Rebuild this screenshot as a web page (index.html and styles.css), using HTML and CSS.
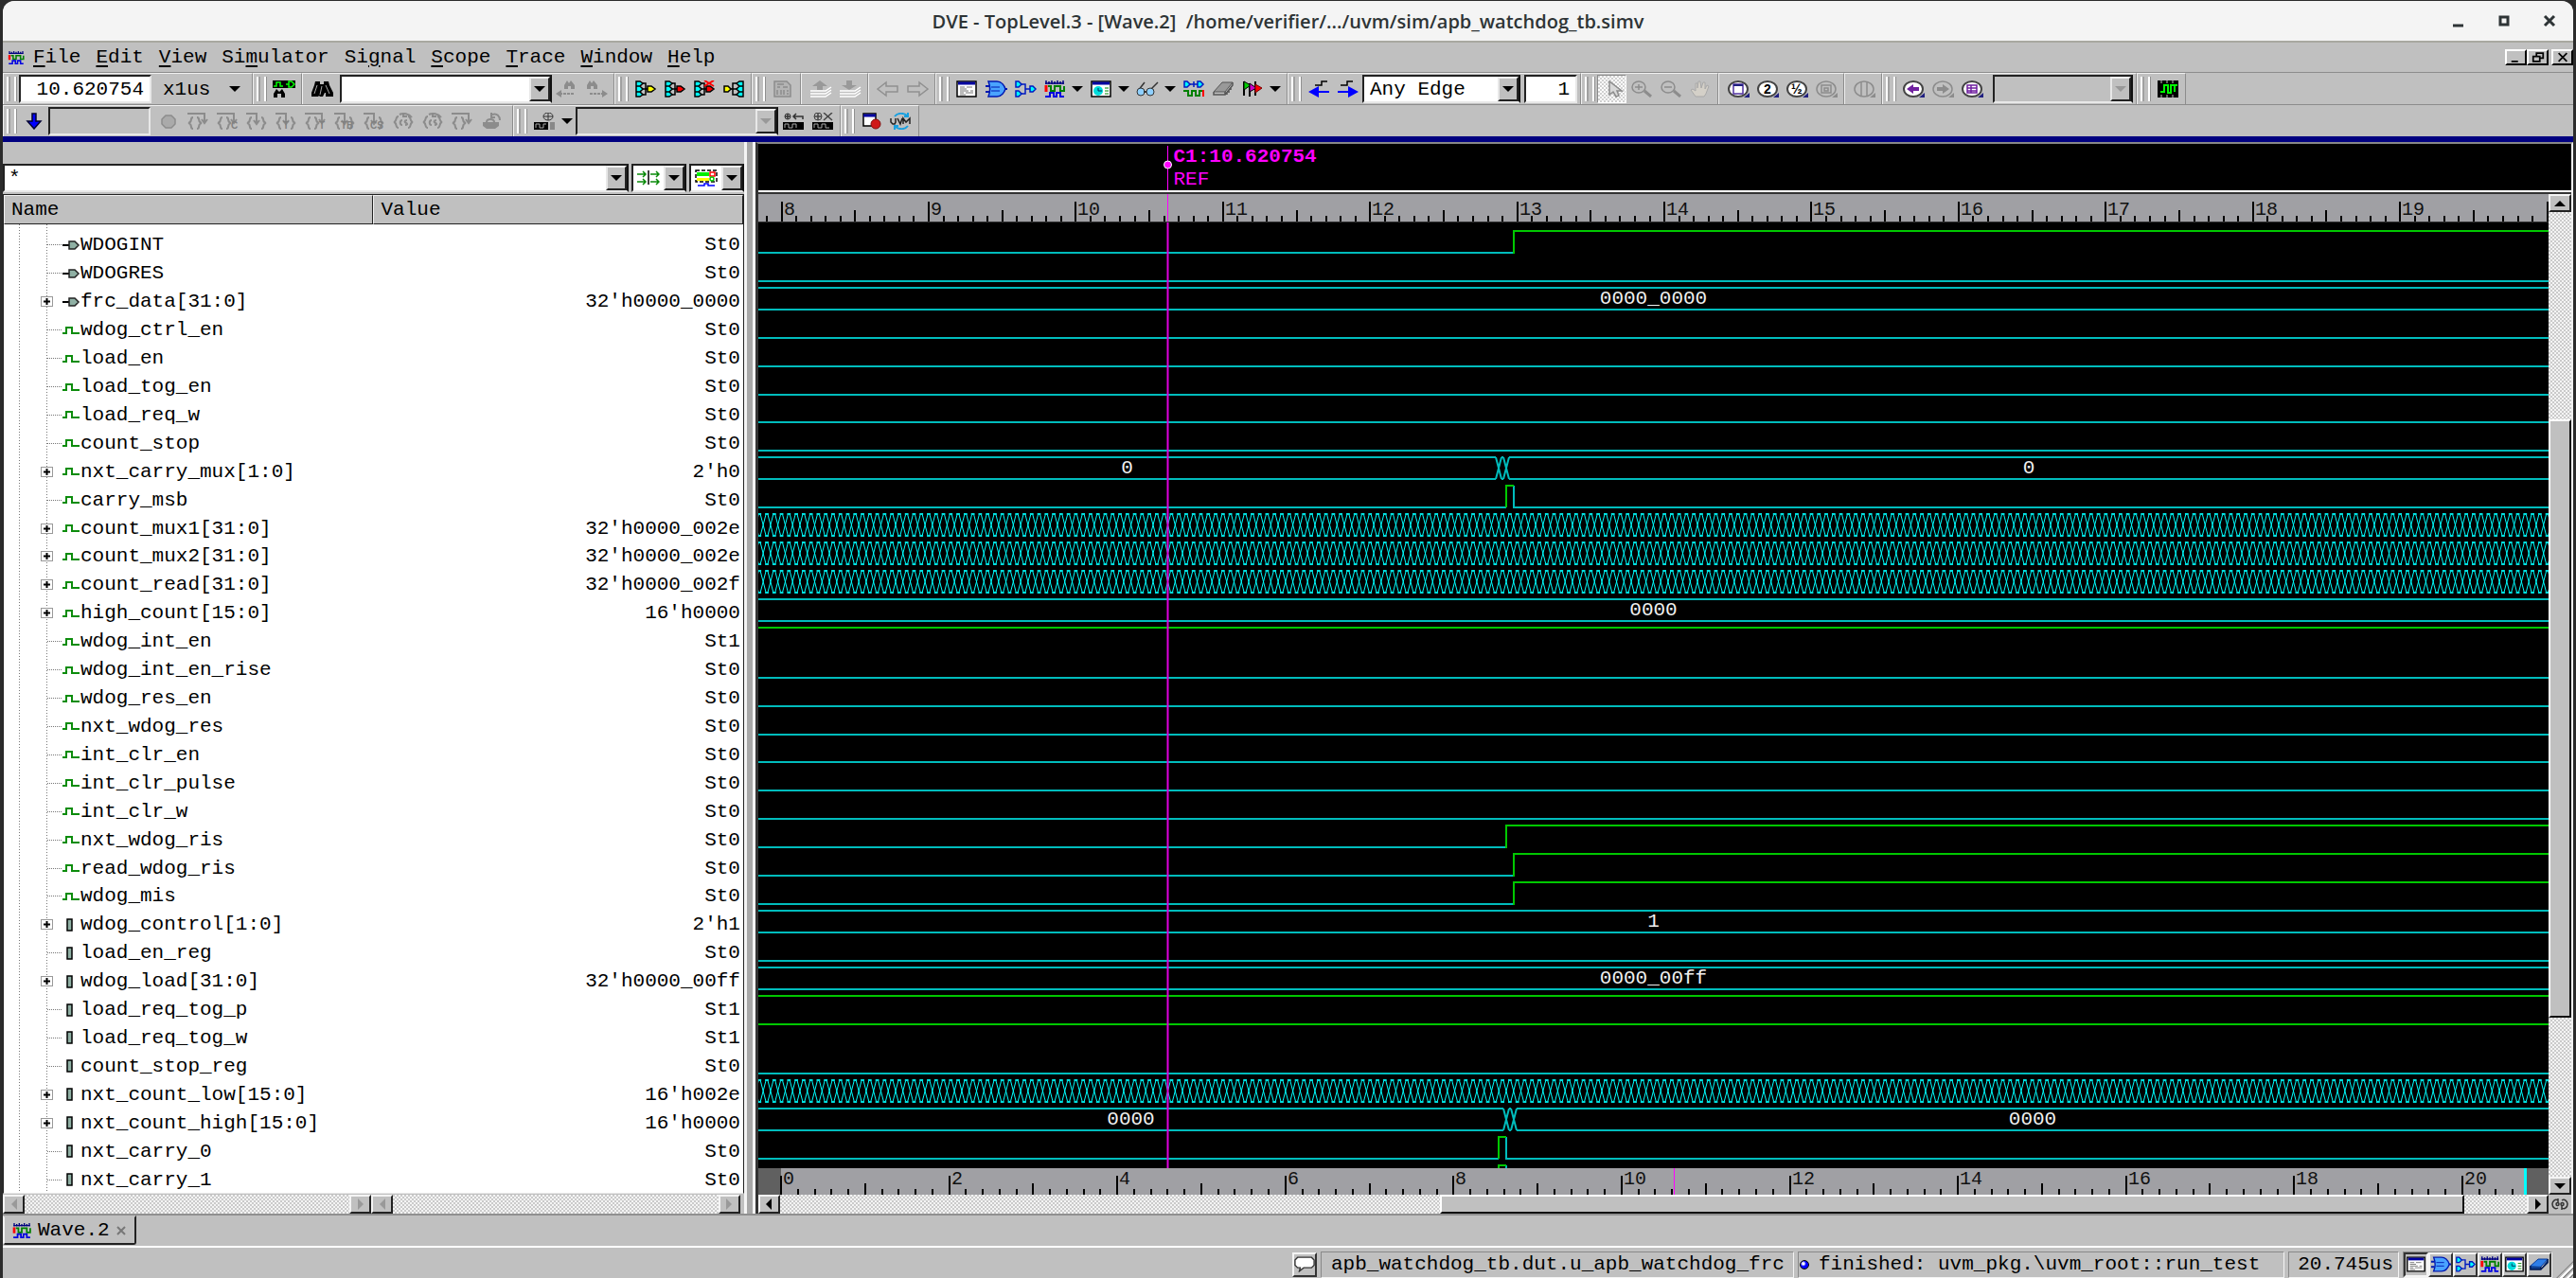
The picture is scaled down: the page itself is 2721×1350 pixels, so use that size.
FILE: index.html
```html
<!DOCTYPE html>
<html lang="en">
<head>
    <meta charset="UTF-8">
    <meta name="viewport" content="width=device-width, initial-scale=1.0">
    <title>DVE - TopLevel.3 - [Wave.2]</title>
    <link rel="stylesheet" href="styles.css">
</head>
<body>
    <!-- icon sprites, all drawn on a 24x18 grid -->
    <svg class="sprites" aria-hidden="true">
        <symbol id="i-wave" viewBox="0 0 24 18">
            <path d="M2 3h20M3 0v4M6 1v3M9 0v4M12 1v3M15 0v4M18 1v3M21 0v4" stroke="#000080" stroke-width="1.5" fill="none"/>
            <path d="M3 5v7" stroke="#f00" stroke-width="3" fill="none"/>
            <path d="M5 6h3v5h4V6h6v5h4V6" stroke="#008000" stroke-width="2" fill="none"/>
            <path d="M2 17h5v-4h4v4h3v-4h4v4h4" stroke="#0000e0" stroke-width="2" fill="none"/>
        </symbol>
        <symbol id="i-list" viewBox="0 0 24 18">
            <path d="M2 1h20v16H2z" fill="#fff" stroke="#000" stroke-width="1.5"/>
            <path d="M3 3h18" stroke="#0000a0" stroke-width="3"/>
            <path d="M5 7h5M12 7h6M5 9h7M5 11h9M16 11h3M5 13h4M11 13h8M5 15h6" stroke="#777"/>
        </symbol>
        <symbol id="i-gate" viewBox="0 0 24 18">
            <path d="M1 6h4M1 12h4M20 9h4" stroke="#0018b0" stroke-width="2"/>
            <path d="M4 1h9c5 0 8 5 9 8-1 3-4 8-9 8H4c2-5 2-11 0-16z" fill="#4aa3ff" stroke="#0018b0" stroke-width="1.5"/>
            <path d="M7 7h9M7 11h9" stroke="#0018b0"/>
        </symbol>
        <symbol id="i-schem" viewBox="0 0 24 18">
            <path d="M7 4h5v10H7M12 9h5" stroke="#0018c0" stroke-width="1.5" fill="none"/>
            <path d="M2 1h3l3 3-3 3H2zM2 11h3l3 3-3 3H2zM17 6h3l3 3-3 3h-3z" fill="#0ff" stroke="#0018c0" stroke-width="1.5"/>
        </symbol>
        <symbol id="i-clock" viewBox="0 0 24 18">
            <path d="M2 1h20v16H2z" fill="#fff" stroke="#000" stroke-width="1.5"/>
            <path d="M3 3h18" stroke="#0000a0" stroke-width="3"/>
            <circle cx="9" cy="11" r="5" fill="#00dcdc"/>
            <path d="M9 8v3h4" stroke="#003060" fill="none"/>
            <path d="M16 8h4M16 11h4M16 14h4" stroke="#080"/>
        </symbol>
        <symbol id="i-chip" viewBox="0 0 24 18">
            <path d="M2 11L11 3h11l-8 9H2z" fill="#2f7fe8" stroke="#003090"/>
            <path d="M2 11v4h12v-3M14 15l8-8V3" fill="#104090" stroke="#001850" stroke-width="1.5"/>
        </symbol>
        <symbol id="i-chip-gray" viewBox="0 0 24 18">
            <path d="M2 12L11 2h11l-8 10H2z" fill="#999" stroke="#555"/>
            <path d="M2 12v3h12v-3M14 15l8-10V2M16 15v-3M18 13v-3M20 10V7" fill="none" stroke="#555" stroke-width="1.5"/>
        </symbol>
        <symbol id="i-glasses" viewBox="0 0 24 18">
            <path d="M2 11L9 2M15 10L23 2" stroke="#333" stroke-width="1.5"/>
            <circle cx="5" cy="12" r="4" fill="#8fd0ff" stroke="#333"/>
            <circle cx="15" cy="12" r="4" fill="#8fd0ff" stroke="#333"/>
            <path d="M8 12h3" stroke="#333" stroke-width="2"/>
        </symbol>
        <symbol id="i-conv" viewBox="0 0 24 18">
            <path d="M2 1h3l3 3-3 3H2zM16 1h3l3 3-3 3h-3z" fill="#0ff" stroke="#0018c0" stroke-width="1.5"/>
            <path d="M8 4h8M12 1v6" stroke="#0018c0" stroke-width="1.500"/>
            <path d="M1 11h5v5h4v-5h4v5h4v-5h4" stroke="#008000" stroke-width="2" fill="none"/>
            <path d="M22 10v7" stroke="#f00" stroke-width="2"/>
        </symbol>
        <symbol id="i-flags" viewBox="0 0 24 18">
            <path d="M3 1v15M9 3v14M15 1v15" stroke="#000" stroke-width="2"/>
            <path d="M3 1l7 4-7 5z" fill="#0c0" stroke="#000"/>
            <path d="M9 3l7 5-7 4z" fill="#c0c" stroke="#000"/>
            <path d="M15 4l7 4-7 5z" fill="#f00" stroke="#700"/>
        </symbol>
        <symbol id="i-binoc" viewBox="0 0 24 18">
            <path d="M5 1h5v3h4V1h5l1 4 4 8v4h-8v-4h-1l-2 4h-3l-1-1-1 1H1v-4l3-8z" fill="#000"/>
            <path d="M7 5L4 14M16 5l4 9M12 6l-2 9" stroke="#aaa"/>
        </symbol>
        <symbol id="i-wavefind" viewBox="0 0 24 18">
            <path d="M0 0h24v8H0z" fill="#000"/>
            <path d="M1 6h3V2h4v4h3M14 4h3V1h3l3 3-3 3h-3V4" stroke="#0f0" stroke-width="1.500" fill="none"/>
            <path d="M1 18v-4l3-5 3 3 3-3 3 5v4H9v-4H5v4z" fill="#000"/>
        </symbol>
        <symbol id="i-findprev" viewBox="0 0 24 18">
            <path d="M9 9V5l3-5 2 3 2-3 4 5v4h-4V6h-3v3zM0 14l6-4v8z" fill="#8c8c8c"/>
            <path d="M4 14h16" stroke="#8c8c8c" stroke-width="2" stroke-dasharray="3 1"/>
        </symbol>
        <symbol id="i-findnext" viewBox="0 0 24 18">
            <path d="M2 9V5l3-5 2 3 2-3 4 5v4H9V6H6v3zM24 14l-6-4v8z" fill="#8c8c8c"/>
            <path d="M5 14h15" stroke="#8c8c8c" stroke-width="2" stroke-dasharray="3 1"/>
        </symbol>
        <symbol id="i-fan" viewBox="0 0 24 18">
            <path d="M8 3h4v12H8M8 9h6" stroke="#000" stroke-width="1.500" fill="none"/>
            <path d="M2 1h4l3 2-3 3H2zM2 6h4l3 3-3 3H2zM2 12h4l3 3-3 2H2z" fill="#0ff" stroke="#000" stroke-width="1.500"/>
        </symbol>
        <symbol id="i-fan-y" viewBox="0 0 24 18">
            <use href="#i-fan"/>
            <path d="M14 6h4l4 3-4 3h-4z" fill="#ff0" stroke="#000" stroke-width="1.500"/>
        </symbol>
        <symbol id="i-fan-r" viewBox="0 0 24 18">
            <use href="#i-fan"/>
            <path d="M14 6h4l4 3-4 3h-4z" fill="#f00" stroke="#000" stroke-width="1.500"/>
        </symbol>
        <symbol id="i-fan-x" viewBox="0 0 24 18">
            <use href="#i-fan-r"/>
            <path d="M12 0l10 6M22 0L12 6" stroke="#f00" stroke-width="2"/>
        </symbol>
        <symbol id="i-fan-in" viewBox="0 0 24 18">
            <path d="M15 3h-4v12h4M15 9H8" stroke="#000" stroke-width="1.500" fill="none"/>
            <path d="M2 6h4l3 3-3 3H2z" fill="#ff0" stroke="#000" stroke-width="1.500"/>
            <path d="M22 1h-4l-3 2 3 3h4zM22 6h-4l-3 3 3 3h4zM22 12h-4l-3 3 3 2h4z" fill="#0ff" stroke="#000" stroke-width="1.500"/>
        </symbol>
        <symbol id="i-doc" viewBox="0 0 24 18">
            <path d="M3 1h13l4 4v12H3z" fill="#b4b4b4" stroke="#8c8c8c" stroke-width="1.500"/>
            <path d="M6 4h7M6 7h3M12 7h5M6 10v5M10 10v5M13 10v5M16 11h2M16 14h2" stroke="#8c8c8c" stroke-width="1.500"/>
        </symbol>
        <symbol id="i-up" viewBox="0 0 24 18">
            <path d="M11 0l8 6h-5v4H8V6H3z" fill="#999"/>
            <path d="M1 11h16l6-4M1 14h16l6-4M1 17h16l6-4" stroke="#fff" stroke-width="1.500" fill="none"/>
        </symbol>
        <symbol id="i-down" viewBox="0 0 24 18">
            <path d="M11 10l8-5h-5V0H8v5H3z" fill="#999"/>
            <path d="M1 11h16l6-4M1 14h16l6-4M1 17h16l6-4" stroke="#fff" stroke-width="1.500" fill="none"/>
        </symbol>
        <symbol id="i-back" viewBox="0 0 24 18">
            <path d="M1 9l9-7v4h12v6H10v4z" fill="#c0c0c0" stroke="#909090" stroke-width="1.500"/>
        </symbol>
        <symbol id="i-fwd" viewBox="0 0 24 18">
            <path d="M23 9l-9-7v4H2v6h12v4z" fill="#c0c0c0" stroke="#909090" stroke-width="1.500"/>
        </symbol>
        <symbol id="i-edgeprev" viewBox="0 0 24 18">
            <path d="M8 5h7V1h6" stroke="#000" stroke-width="1.500" fill="none"/>
            <path d="M1 12l11-6v5h11v2H12v5z" fill="#00f"/>
        </symbol>
        <symbol id="i-edgenext" viewBox="0 0 24 18">
            <path d="M4 5h7V1h6" stroke="#000" stroke-width="1.500" fill="none"/>
            <path d="M23 12L12 6v5H1v2h11v5z" fill="#00f"/>
        </symbol>
        <symbol id="i-pointer" viewBox="0 0 24 18">
            <path d="M9 1v14l4-3 3 5 3-1-2-5h5z" fill="#d8d8d8" stroke="#8c8c8c" stroke-width="1.500"/>
        </symbol>
        <symbol id="i-zoomin" viewBox="0 0 24 18">
            <ellipse cx="9" cy="7" rx="7" ry="6" fill="none" stroke="#8c8c8c" stroke-width="1.500"/>
            <path d="M5 7h8M9 4v6" stroke="#8c8c8c" stroke-width="1.500"/>
            <path d="M15 11l7 6" stroke="#8c8c8c" stroke-width="3"/>
        </symbol>
        <symbol id="i-zoomout" viewBox="0 0 24 18">
            <ellipse cx="9" cy="7" rx="7" ry="6" fill="none" stroke="#8c8c8c" stroke-width="1.500"/>
            <path d="M5 7h8" stroke="#8c8c8c" stroke-width="1.500"/>
            <path d="M15 11l7 6" stroke="#8c8c8c" stroke-width="3"/>
        </symbol>
        <symbol id="i-hand" viewBox="0 0 24 18">
            <path d="M7 17L2 10l2-1 3 2V3h2v5l1-7h2l1 7 2-6h2v7l2-4 2 1-3 8-2 3z" fill="#d4d0c8" stroke="#a8a8a8"/>
        </symbol>
        <symbol id="i-lens" viewBox="0 0 24 18">
            <ellipse cx="12" cy="9" rx="10" ry="8" fill="#fff" stroke="#444" stroke-width="2"/>
            <path d="M18 18h6v-5z" fill="#202080"/>
        </symbol>
        <symbol id="i-lens-off" viewBox="0 0 24 18">
            <ellipse cx="12" cy="9" rx="10" ry="8" fill="none" stroke="#8c8c8c" stroke-width="1.500"/>
            <path d="M18 18h6v-5z" fill="#8c8c8c"/>
        </symbol>
        <symbol id="i-fit" viewBox="0 0 24 18">
            <use href="#i-lens"/>
            <path d="M7 4h10v10H7z" fill="#fff" stroke="#5030a0" stroke-width="1.500"/>
            <path d="M7 5h10" stroke="#202080" stroke-width="2"/>
        </symbol>
        <symbol id="i-selbox" viewBox="0 0 24 18">
            <use href="#i-lens-off"/>
            <path d="M7 5h10v8H7zM10 8h4v3h-4z" fill="none" stroke="#8c8c8c" stroke-width="1.500"/>
        </symbol>
        <symbol id="i-split" viewBox="0 0 24 18">
            <use href="#i-lens-off"/>
            <path d="M9 1v16M15 1v16" stroke="#8c8c8c" stroke-width="1.500"/>
        </symbol>
        <symbol id="i-lensback" viewBox="0 0 24 18">
            <use href="#i-lens"/>
            <path d="M5 9l7-5v3h6v4h-6v3z" fill="#7020a0"/>
        </symbol>
        <symbol id="i-lensfwd" viewBox="0 0 24 18">
            <use href="#i-lens-off"/>
            <path d="M19 9l-7-5v3H6v4h6v3z" fill="#8c8c8c"/>
        </symbol>
        <symbol id="i-lenslist" viewBox="0 0 24 18">
            <use href="#i-lens"/>
            <path d="M7 5h10v8H7zM11 5v8M7 8h10M7 11h10" fill="none" stroke="#7020a0" stroke-width="1.500"/>
        </symbol>
        <symbol id="i-waves" viewBox="0 0 24 18">
            <path d="M1 0h22v18H1z" fill="#000"/>
            <path d="M4 12h4V5h4v8h3V5h4v7M19 5h3" stroke="#0f0" stroke-width="2" fill="none"/>
            <path d="M5 0v3M11 0v3M17 0v3M5 15v3M11 15v3M17 15v3" stroke="#c0c0c0" stroke-width="1"/>
        </symbol>
        <symbol id="i-run" viewBox="0 0 24 18">
            <path d="M12 17l7-8h-5V1h-4v8H5z" fill="#00f" stroke="#003" stroke-width="1.500"/>
        </symbol>
        <symbol id="i-stop" viewBox="0 0 24 18">
            <path d="M9 3h6l4 4v5l-4 4H9l-4-4V7z" fill="#aaa" stroke="#8c8c8c" stroke-width="1.500"/>
        </symbol>
        <symbol id="i-brace" viewBox="0 0 24 18">
            <path d="M7 5C3 5 7 10 2 11c5 1 1 6 5 6M11 5c4 0 0 5 5 6-5 1-1 6-5 6M1 1h18v9M16 7l3 4 3-4" fill="none" stroke="#8c8c8c" stroke-width="2"/>
        </symbol>
        <symbol id="i-brace-in" viewBox="0 0 24 18">
            <path d="M7 5C3 5 7 10 2 11c5 1 1 6 5 6M17 5c4 0 0 5 5 6-5 1-1 6-5 6M1 1h11v10M9 8l3 4 3-4" fill="none" stroke="#8c8c8c" stroke-width="2"/>
        </symbol>
        <symbol id="i-brace-loop" viewBox="0 0 24 18">
            <path d="M7 4C3 4 6 9 2 10c4 1 1 6 5 6M17 4c4 0 1 5 5 6-4 1-1 6-5 6M8 2c4-2 10-1 13 3M12 0v4h4M11 8c-3 0-3 5 0 5M16 8c-3 0-3 2-1 3s1 2-1 2" fill="none" stroke="#8c8c8c" stroke-width="2"/>
        </symbol>
        <symbol id="i-pot" viewBox="0 0 24 18">
            <path d="M3 10h17v4l-4 3H7l-4-3z" fill="#8c8c8c"/>
            <path d="M7 10c0-4 8-4 8 0M13 2c5-2 8 2 8 6M12 0v5h4" fill="none" stroke="#8c8c8c" stroke-width="2"/>
        </symbol>
        <symbol id="i-target" viewBox="0 0 24 18">
            <ellipse cx="16" cy="4" rx="5" ry="4" fill="none" stroke="#333"/>
            <path d="M16 0v8M11 4h10" stroke="#333"/>
            <path d="M1 10h15v8H1z" fill="#000"/>
            <path d="M3 16v-4h4v4h4v-4h3" stroke="#aaa" fill="none"/>
            <path d="M18 10h5v8h-5z" fill="#888"/>
        </symbol>
        <symbol id="i-marker" viewBox="0 0 24 18">
            <circle cx="6" cy="4" r="3" fill="none" stroke="#333"/>
            <path d="M3 4h6M6 1v6M22 7V4H12M15 1l-3 3 3 3" stroke="#333" stroke-width="1.500" fill="none"/>
            <path d="M1 10h22v8H1z" fill="#000"/>
            <path d="M3 16v-4h4v4h4v-4h4v4" stroke="#aaa" fill="none"/>
        </symbol>
        <symbol id="i-unmark" viewBox="0 0 24 18">
            <circle cx="7" cy="4" r="4" fill="none" stroke="#444"/>
            <path d="M3 4h8M7 0v8M13 0l9 8M22 0l-9 8" stroke="#444" stroke-width="1.500"/>
            <path d="M1 10h22v8H1z" fill="#000"/>
            <path d="M3 16v-4h4v4h4v-4h4v4h4" stroke="#aaa" fill="none"/>
        </symbol>
        <symbol id="i-record" viewBox="0 0 24 18">
            <path d="M3 1h13v13H3z" fill="#fff" stroke="#000" stroke-width="1.500"/>
            <path d="M3 3h13" stroke="#0000a0" stroke-width="3"/>
            <circle cx="16" cy="12" r="5" fill="#d01818" stroke="#801010"/>
        </symbol>
        <symbol id="i-uvm" viewBox="0 0 24 18">
            <path d="M5 4c3-4 9-4 13-1M19 0v4h-4M19 14c-3 4-9 4-13 1M5 18v-4h4" fill="none" stroke="#18a0e0" stroke-width="2"/>
            <path d="M1 6v4l2 2h2l1-2V6M8 6l3 6 2-6M14 12V6l3 4 4-4v6" fill="none" stroke="#222" stroke-width="1.500"/>
        </symbol>
        <symbol id="i-arrows" viewBox="0 0 24 18">
            <path d="M0 5h8M14 5h9M0 13h8M14 13h9M6 2l3 3-3 3M20 2l3 3-3 3M6 10l3 3-3 3M20 10l3 3-3 3" fill="none" stroke="#0a8a0a" stroke-width="1.500"/>
            <path d="M12 1v15" stroke="#000" stroke-width="1.500"/>
        </symbol>
        <symbol id="i-group" viewBox="0 0 24 18">
            <path d="M1 1h22v12H1z" fill="none" stroke="#000" stroke-width="1.500" stroke-dasharray="4 2"/>
            <path d="M2 3h13v4H2z" fill="#0e0"/>
            <path d="M16 3h5v4h-5z" fill="#fff" stroke="#f00" stroke-width="1.500"/>
            <path d="M2 9h13v3H2z" fill="#ff0"/>
            <circle cx="18" cy="10" r="2" fill="#fff" stroke="#0c0" stroke-width="1.500"/>
            <path d="M3 17h7v-2h4v2h7" fill="none" stroke="#00f" stroke-width="1.500"/>
        </symbol>
        <symbol id="i-bubble" viewBox="0 0 24 18">
            <path d="M4 1h16l3 3v6l-3 3h-9l-5 4 1-4H4l-3-3V4z" fill="#fff" stroke="#333" stroke-width="1.500"/>
        </symbol>
        <symbol id="i-link" viewBox="0 0 24 18">
            <path d="M10 5c-3-2-6 1-6 4s3 6 6 4M10 3v4M8 9c0-2 3-2 3 0s-3 2-3 0M14 13c3 2 6-1 6-4s-3-6-6-4M14 15v-4M13 9c0-2 3-2 3 0s-3 2-3 0" fill="none" stroke="#333" stroke-width="1.500"/>
        </symbol>
        <symbol id="i-port" viewBox="0 0 24 18">
            <path d="M3 9h7" stroke="#000" stroke-width="2"/>
            <path d="M10 5h6l4 4-4 4h-6z" fill="#8fb0a4" stroke="#222" stroke-width="1.500"/>
        </symbol>
        <symbol id="i-net" viewBox="0 0 24 18">
            <path d="M3 12h4V6h6v6h8" fill="none" stroke="#0c8c0c" stroke-width="2"/>
        </symbol>
        <symbol id="i-reg" viewBox="0 0 24 18">
            <path d="M8 3h5v12H8z" fill="#8fb0a4" stroke="#000" stroke-width="1.500"/>
        </symbol>
    </svg>

    <div class="window">
        <header class="titlebar">
            <h1 class="title">DVE - TopLevel.3 - [Wave.2]&nbsp; /home/verifier/.../uvm/sim/apb_watchdog_tb.simv</h1>
            <div class="win-controls">
                <button aria-label="Minimize"><svg viewBox="0 0 14 14"><path d="M1 12h11" stroke="#2e3436" stroke-width="3"/></svg></button>
                <button aria-label="Maximize"><svg viewBox="0 0 14 14"><path d="M3 3h8v8H3z" fill="none" stroke="#2e3436" stroke-width="3"/></svg></button>
                <button aria-label="Close"><svg viewBox="0 0 14 14"><path d="M2 2l10 10M12 2L2 12" stroke="#2e3436" stroke-width="3"/></svg></button>
            </div>
        </header>

        <nav class="menubar">
            <svg class="menu-icon"><use href="#i-wave"/></svg>
            <button><u>F</u>ile</button>
            <button><u>E</u>dit</button>
            <button><u>V</u>iew</button>
            <button>Si<u>m</u>ulator</button>
            <button>Si<u>g</u>nal</button>
            <button><u>S</u>cope</button>
            <button><u>T</u>race</button>
            <button><u>W</u>indow</button>
            <button><u>H</u>elp</button>
            <div class="mdi">
                <button aria-label="Minimize window"><svg viewBox="0 0 16 12"><path d="M2 11h8" stroke="#000" stroke-width="2"/></svg></button>
                <button aria-label="Restore window"><svg viewBox="0 0 16 12"><path d="M6 4V1h8v6h-3M2 5h8v6H2z" fill="none" stroke="#000" stroke-width="2"/></svg></button>
                <button class="mdi-close" aria-label="Close window"><svg viewBox="0 0 16 12"><path d="M3 1l10 10M13 1L3 11" stroke="#000" stroke-width="2"/></svg></button>
            </div>
        </nav>

        <div class="toolbar">
            <div class="group w-time">
                <span class="grip"></span>
                <input class="field time" aria-label="Time" value="10.620754">
                <span class="unit"><select aria-label="Time unit"><option>x1us</option></select><span class="tri"></span></span>
            </div>
            <div class="group"><span class="grip"></span><button class="tool" aria-label="Find signal"><svg><use href="#i-wavefind"/></svg></button></div>
            <div class="group plain">
                <button class="tool" aria-label="Find"><svg><use href="#i-binoc"/></svg></button>
                <span class="combo find"><select aria-label="Find text"><option></option></select><span class="drop"></span></span>
                <button class="tool" aria-label="Find previous" disabled><svg><use href="#i-findprev"/></svg></button>
                <button class="tool" aria-label="Find next" disabled><svg><use href="#i-findnext"/></svg></button>
            </div>
            <div class="group">
                <span class="grip"></span>
                <button class="tool" aria-label="Drivers"><svg><use href="#i-fan-y"/></svg></button>
                <button class="tool" aria-label="Active drivers"><svg><use href="#i-fan-r"/></svg></button>
                <button class="tool" aria-label="Trace X"><svg><use href="#i-fan-x"/></svg></button>
                <button class="tool" aria-label="Loads"><svg><use href="#i-fan-in"/></svg></button>
            </div>
            <div class="group"><span class="grip"></span><button class="tool" aria-label="Source" disabled><svg><use href="#i-doc"/></svg></button></div>
            <div class="group plain">
                <button class="tool" aria-label="Scope up" disabled><svg><use href="#i-up"/></svg></button>
                <button class="tool" aria-label="Scope down" disabled><svg><use href="#i-down"/></svg></button>
            </div>
            <div class="group plain">
                <button class="tool" aria-label="Back" disabled><svg><use href="#i-back"/></svg></button>
                <button class="tool" aria-label="Forward" disabled><svg><use href="#i-fwd"/></svg></button>
            </div>
            <div class="group">
                <span class="grip"></span>
                <button class="tool" aria-label="Source view"><svg><use href="#i-list"/></svg></button>
                <button class="tool" aria-label="Schematic"><svg><use href="#i-gate"/></svg></button>
                <button class="tool" aria-label="Path schematic"><svg><use href="#i-schem"/></svg></button>
                <button class="tool" aria-label="Wave view"><svg><use href="#i-wave"/></svg></button>
                <button class="more" aria-label="Wave options"><span class="tri"></span></button>
                <button class="tool" aria-label="List view"><svg><use href="#i-clock"/></svg></button>
                <button class="more" aria-label="List options"><span class="tri"></span></button>
                <button class="tool" aria-label="Watch"><svg><use href="#i-glasses"/></svg></button>
                <button class="more" aria-label="Watch options"><span class="tri"></span></button>
                <button class="tool" aria-label="Compare"><svg><use href="#i-conv"/></svg></button>
                <button class="tool" aria-label="Memory"><svg><use href="#i-chip-gray"/></svg></button>
                <button class="tool" aria-label="Assertions"><svg><use href="#i-flags"/></svg></button>
                <button class="more" aria-label="Assertion options"><span class="tri"></span></button>
            </div>
            <div class="group">
                <span class="grip"></span>
                <button class="tool" aria-label="Previous edge"><svg><use href="#i-edgeprev"/></svg></button>
                <button class="tool" aria-label="Next edge"><svg><use href="#i-edgenext"/></svg></button>
                <span class="combo edge"><select aria-label="Edge type"><option>Any Edge</option></select><span class="drop"></span></span>
                <input class="field count" aria-label="Edge count" value="1">
            </div>
            <div class="group">
                <span class="grip"></span>
                <button class="tool pressed" aria-label="Select" disabled><svg><use href="#i-pointer"/></svg></button>
                <button class="tool" aria-label="Zoom in" disabled><svg><use href="#i-zoomin"/></svg></button>
                <button class="tool" aria-label="Zoom out" disabled><svg><use href="#i-zoomout"/></svg></button>
                <button class="tool" aria-label="Pan" disabled><svg><use href="#i-hand"/></svg></button>
            </div>
            <div class="group plain">
                <button class="tool" aria-label="Zoom full"><svg><use href="#i-fit"/></svg></button>
                <button class="tool" aria-label="Zoom in 2x"><svg viewBox="0 0 24 18"><use href="#i-lens"/><text x="8" y="14" class="lens-text">2</text></svg></button>
                <button class="tool" aria-label="Zoom out 2x"><svg viewBox="0 0 24 18"><use href="#i-lens"/><text x="6" y="14" class="lens-text">½</text></svg></button>
                <button class="tool" aria-label="Zoom to selection" disabled><svg><use href="#i-selbox"/></svg></button>
            </div>
            <div class="group plain"><button class="tool" aria-label="Zoom cursors" disabled><svg><use href="#i-split"/></svg></button></div>
            <div class="group">
                <span class="grip"></span>
                <button class="tool" aria-label="Zoom back"><svg><use href="#i-lensback"/></svg></button>
                <button class="tool" aria-label="Zoom forward" disabled><svg><use href="#i-lensfwd"/></svg></button>
                <button class="tool" aria-label="Named zooms"><svg><use href="#i-lenslist"/></svg></button>
                <span class="combo off zooms"><select aria-label="Zoom name" disabled><option></option></select><span class="drop"></span></span>
            </div>
            <div class="group"><span class="grip"></span><button class="tool" aria-label="Waves"><svg><use href="#i-waves"/></svg></button></div>
        </div>

        <div class="toolbar">
            <div class="group w-sim">
                <span class="grip"></span>
                <button class="tool" aria-label="Run"><svg><use href="#i-run"/></svg></button>
                <input class="field off step" aria-label="Run time" disabled>
                <button class="tool" aria-label="Stop" disabled><svg><use href="#i-stop"/></svg></button>
                <button class="tool" aria-label="Next" disabled><svg><use href="#i-brace"/></svg></button>
                <button class="tool" aria-label="Next in C" disabled><svg viewBox="0 0 24 18"><use href="#i-brace"/><text x="16" y="17" class="tag">C</text></svg></button>
                <button class="tool" aria-label="Step" disabled><svg><use href="#i-brace-in"/></svg></button>
                <button class="tool" aria-label="Step thread" disabled><svg viewBox="0 0 24 18"><use href="#i-brace-in"/><text x="9" y="17" class="tag">T</text></svg></button>
                <button class="tool" aria-label="Next thread" disabled><svg viewBox="0 0 24 18"><use href="#i-brace"/><text x="16" y="17" class="tag">T</text></svg></button>
                <button class="tool" aria-label="Step testbench" disabled><svg viewBox="0 0 24 18"><use href="#i-brace-in"/><text x="8" y="17" class="tag">TB</text></svg></button>
                <button class="tool" aria-label="Step constraint" disabled><svg viewBox="0 0 24 18"><use href="#i-brace-in"/><text x="8" y="17" class="tag">CS</text></svg></button>
                <button class="tool" aria-label="Constraint solver" disabled><svg><use href="#i-brace-loop"/></svg></button>
                <button class="tool" aria-label="Constraint rerun" disabled><svg><use href="#i-brace-loop"/></svg></button>
                <button class="tool" aria-label="Step out" disabled><svg><use href="#i-brace"/></svg></button>
                <button class="tool" aria-label="Restart" disabled><svg><use href="#i-pot"/></svg></button>
            </div>
            <div class="group">
                <span class="grip"></span>
                <button class="tool" aria-label="Add marker"><svg><use href="#i-target"/></svg></button>
                <button class="more" aria-label="Marker options"><span class="tri"></span></button>
                <span class="combo off marks"><select aria-label="Marker" disabled><option></option></select><span class="drop"></span></span>
                <button class="tool" aria-label="Go to marker"><svg><use href="#i-marker"/></svg></button>
                <button class="tool" aria-label="Delete marker"><svg><use href="#i-unmark"/></svg></button>
            </div>
            <div class="group">
                <span class="grip"></span>
                <button class="tool" aria-label="Record"><svg><use href="#i-record"/></svg></button>
                <button class="tool" aria-label="UVM"><svg><use href="#i-uvm"/></svg></button>
            </div>
        </div>

        <main class="workspace">
            <section class="signals">
                <div class="filters">
                    <span class="combo filter"><select aria-label="Filter"><option>*</option></select><span class="drop"></span></span>
                    <button class="combo filter-btn" aria-label="Port filter"><svg><use href="#i-arrows"/></svg><span class="drop"></span></button>
                    <button class="combo filter-btn" aria-label="Group filter"><svg><use href="#i-group"/></svg><span class="drop"></span></button>
                </div>
                <table class="list">
                    <thead>
                        <tr><th>Name</th><th>Value</th></tr>
                    </thead>
                    <tbody id="rows"></tbody>
                </table>
                <div class="list-scroll">
                    <div class="hscroll"><button class="arrow left off" aria-label="Left"></button><span class="track"></span><button class="arrow right off" aria-label="Right"></button></div>
                    <div class="hscroll"><button class="arrow left off" aria-label="Left"></button><span class="track"></span><button class="arrow right off" aria-label="Right"></button></div>
                </div>
            </section>
            <div class="splitter"></div>
            <section class="waves">
                <svg class="band" id="band"></svg>
                <div class="wave-body">
                    <div class="canvas">
                        <svg class="ruler" id="ruler"></svg>
                        <svg class="plot" id="plot"></svg>
                        <svg class="overview" id="overview"></svg>
                        <div class="hscroll">
                            <button class="arrow left" aria-label="Left"></button>
                            <span class="track h-before"></span><span class="thumb h-thumb"></span><span class="track h-after"></span>
                            <button class="arrow right" aria-label="Right"></button>
                        </div>
                    </div>
                    <div class="vscroll">
                        <button class="arrow up" aria-label="Up"></button>
                        <span class="track v-before"></span><span class="thumb v-thumb"></span><span class="track v-after"></span>
                        <button class="arrow down" aria-label="Down"></button>
                        <button class="link" aria-label="Link windows"><svg><use href="#i-link"/></svg></button>
                    </div>
                </div>
            </section>
        </main>

        <div class="tabs">
            <button class="tab"><svg><use href="#i-wave"/></svg>Wave.2<svg class="tab-close" viewBox="0 0 12 12"><path d="M2 2l8 8M10 2l-8 8" stroke="#777" stroke-width="2"/></svg></button>
        </div>

        <footer class="status">
            <button class="status-btn" aria-label="Messages"><svg><use href="#i-bubble"/></svg></button>
            <span class="cell scope">apb_watchdog_tb.dut.u_apb_watchdog_frc</span>
            <span class="cell state"><i class="dot"></i>finished: uvm_pkg.\uvm_root::run_test</span>
            <span class="cell now">20.745us</span>
            <div class="cell views">
                <button class="status-btn on" aria-label="Source"><svg><use href="#i-list"/></svg></button>
                <button class="status-btn" aria-label="Schematic"><svg><use href="#i-gate"/></svg></button>
                <button class="status-btn" aria-label="Path"><svg><use href="#i-schem"/></svg></button>
                <button class="status-btn" aria-label="Wave"><svg><use href="#i-wave"/></svg></button>
                <button class="status-btn" aria-label="List"><svg><use href="#i-clock"/></svg></button>
                <button class="status-btn" aria-label="Memory"><svg><use href="#i-chip"/></svg></button>
            </div>
            <span class="resize"></span>
        </footer>
    </div>

    <script src="wave.js"></script>
</body>
</html>
```
FILE: styles.css
```css
* {
    box-sizing: border-box;
}

body {
    margin: 0;
    height: 100vh;
    padding: 1px 3px 0;
    background: #2b2b2b;
    font-family: "Liberation Mono", "Courier New", monospace;
    font-size: 21px;
    color: #000;
    overflow: hidden;
}

button, input, select {
    font: inherit;
    color: inherit;
    margin: 0;
    padding: 0;
    border: 0;
    border-radius: 0;
    background: none;
    appearance: none;
    opacity: 1;
}

button {
    display: flex;
    align-items: center;
    justify-content: center;
}

.sprites {
    display: none;
}

svg {
    display: block;
    width: 24px;
    height: 18px;
    flex: none;
}

.window {
    height: 100%;
    display: flex;
    flex-direction: column;
    background: #c0c0c0;
    border-radius: 12px 12px 0 0;
    overflow: hidden;
}

/* title bar */
.titlebar {
    display: grid;
    grid-template-columns: 1fr auto 1fr;
    align-items: center;
    height: 44px;
    flex: none;
    background: #f4f4f4;
    border-bottom: 2px solid #a8a8a0;
}

.title {
    grid-column: 2;
    margin: 0;
    font-family: "Open Sans", "Noto Sans", sans-serif;
    font-size: 20px;
    font-weight: 600;
    color: #2e3436;
    white-space: nowrap;
}

.win-controls {
    display: flex;
    justify-content: flex-end;
    gap: 34px;
    padding-right: 18px;
}

.win-controls svg {
    width: 14px;
    height: 14px;
}

/* menu */
.menubar {
    display: flex;
    align-items: center;
    gap: 16px;
    height: 31px;
    flex: none;
    padding-left: 4px;
}

.menubar u {
    text-underline-offset: 3px;
}

.menu-icon {
    width: 20px;
    height: 14px;
    margin-right: -8px;
}

.mdi {
    display: flex;
    margin-left: auto;
}

.mdi button {
    width: 23px;
    height: 17px;
    border: 2px solid;
    border-color: #fff #000 #000 #fff;
}

.mdi .mdi-close {
    margin-left: 3px;
}

.mdi svg {
    width: 14px;
    height: 11px;
}

/* toolbars */
.toolbar {
    display: flex;
    height: 34px;
    flex: none;
    border-top: 1px solid #8c8c8c;
}

.group {
    display: flex;
    align-items: stretch;
    padding-right: 3px;
    border-top: 1px solid #f0f0f0;
    border-right: 1px solid #8c8c8c;
    border-left: 1px solid #f0f0f0;
}

.group.plain {
    padding-left: 4px;
}

.w-time {
    padding-right: 0;
}

.w-sim {
    padding-right: 7px;
}

.grip {
    width: 10px;
    margin: 3px 3px;
    border-style: solid;
    border-width: 0 2px;
    border-color: #fff;
    box-shadow: inset 2px 0 #a0a0a0, inset -2px 0 #c0c0c0, 1px 0 #909090;
}

.tool {
    width: 31px;
}

.tool.pressed {
    margin: 1px 0;
    background: repeating-conic-gradient(#fff 0 25%, #d0d0d0 0 50%) 0 0 / 4px 4px;
    border: 1px solid;
    border-color: #8c8c8c #fff #fff #8c8c8c;
}

.more {
    width: 18px;
}

.tri {
    border: 6px solid transparent;
    border-top-color: #000;
    border-bottom: 0;
}

.field {
    margin: 1px 0;
    padding-right: 6px;
    background: #fff;
    border: 2px solid;
    border-color: #222 #e8e8e8 #e8e8e8 #222;
    text-align: right;
}

.field.off {
    background: #c0c0c0;
}

.time {
    width: 140px;
}

.count {
    width: 56px;
    margin-left: 4px;
}

.step {
    width: 108px;
    margin-right: 3px;
}

.unit {
    display: flex;
    align-items: center;
    width: 106px;
    padding: 0 12px;
}

.unit select {
    width: 70px;
}

.combo {
    position: relative;
    display: flex;
    margin: 1px 0;
    background: #fff;
    border: 2px solid;
    border-color: #222 #111 #e8e8e8 #222;
}

.combo select {
    width: 100%;
    padding-left: 6px;
}

.combo.off {
    background: #c0c0c0;
}

.drop {
    position: absolute;
    top: 0;
    right: 0;
    bottom: 0;
    display: flex;
    align-items: center;
    justify-content: center;
    width: 22px;
    background: #c0c0c0;
    border: 2px solid;
    border-color: #f0f0f0 #222 #222 #e8e8e8;
}

.drop::after {
    content: "";
    border: 6px solid transparent;
    border-top-color: #000;
    border-bottom: 0;
}

.combo.off .drop::after {
    border-top-color: #999;
}

.find {
    width: 224px;
    margin-left: 4px;
}

.edge {
    width: 167px;
}

.zooms {
    width: 148px;
    margin-left: 7px;
}

.marks {
    width: 214px;
}

.lens-text {
    font-family: "Liberation Sans", sans-serif;
    font-size: 14px;
    font-weight: bold;
}

.tag {
    font-family: "Liberation Sans", sans-serif;
    font-size: 10px;
    font-weight: bold;
    fill: #808080;
}

.tool svg {
    overflow: visible;
}

/* main area */
.workspace {
    display: flex;
    flex: 1;
    min-height: 0;
    border-top: 6px solid #000080;
    border-bottom: 2px solid #909090;
}

.signals {
    display: flex;
    flex-direction: column;
    flex: 785 1 0;
    min-width: 0;
    padding-top: 23px;
}

.filters {
    display: flex;
    gap: 3px;
    height: 30px;
    flex: none;
}

.filters .combo {
    margin: 0;
}

.filters .combo select {
    padding-left: 4px;
}

.filter {
    flex: 1;
}

.filter-btn {
    width: 58px;
    justify-content: flex-start;
    padding-left: 4px;
}

.list {
    flex: 1;
    min-height: 0;
    margin-top: 2px;
    display: flex;
    flex-direction: column;
    background: #fff;
    border: 1px solid #222;
    border-bottom: 1px solid #e8e8e8;
    border-collapse: collapse;
}

.list thead {
    flex: none;
}

.list tr {
    display: grid;
    grid-template-columns: 1fr 1fr;
    align-items: center;
}

.list th {
    height: 31px;
    padding: 1px 7px 0;
    background: #c0c0c0;
    border: 1px solid;
    border-color: #f0f0f0 #222 #222 #f0f0f0;
    font-weight: normal;
    text-align: left;
    line-height: 28px;
}

.list tbody {
    flex: 1;
    min-height: 0;
    display: grid;
    grid-auto-rows: 1fr;
    padding-top: 6px;
    background:
        repeating-linear-gradient(#777 0 1px, transparent 1px 3px) 16px 0 / 1px 100% no-repeat,
        repeating-linear-gradient(#777 0 1px, transparent 1px 3px) 45px 0 / 1px 100% no-repeat;
}

.list td {
    padding: 2px 0 0;
    line-height: 27px;
    white-space: nowrap;
}

.list td.name {
    display: flex;
    align-items: center;
    padding-left: 39px;
}

.list td.value {
    padding-right: 3px;
    text-align: right;
}

.branch {
    width: 15px;
    margin-left: 7px;
    border-top: 1px dotted #777;
}

.expand {
    width: 13px;
    height: 11px;
    margin-right: 9px;
    background: #fff;
    border: 1px solid #999;
}

.expand svg {
    width: 9px;
    height: 9px;
}

.list td.name > svg {
    margin: 0 -2px;
}

.list-scroll {
    display: grid;
    grid-template-columns: 1fr 1fr;
    flex: none;
    padding-top: 1px;
    padding-right: 4px;
}

/* scroll bars */
.hscroll {
    display: flex;
    height: 20px;
    flex: none;
}

.vscroll {
    display: flex;
    flex-direction: column;
    width: 24px;
}

.track {
    flex: 1;
    background: repeating-conic-gradient(#f4f4f4 0 25%, #cacaca 0 50%) 0 0 / 4px 4px;
}

.thumb {
    background: #c0c0c0;
    border: 2px solid;
    border-color: #fff #111 #111 #fff;
}

.h-before { flex-grow: 699; }
.h-thumb { flex: 1081 0 0; }
.h-after { flex-grow: 66; }
.v-before { flex-grow: 220; }
.v-thumb { flex: 629 0 0; }
.v-after { flex-grow: 169; }

.arrow {
    background: #c0c0c0;
    border: 2px solid;
    border-color: #f4f4f4 #222 #222 #f4f4f4;
}

.arrow::after {
    content: "";
    border: 6px solid transparent;
}

.left, .right {
    width: 23px;
}

.up, .down {
    height: 19px;
}

.left::after { border-right-color: #000; border-left: 0; }
.right::after { border-left-color: #000; border-right: 0; }
.up::after { border-bottom-color: #000; border-top: 0; }
.down::after { border-top-color: #000; border-bottom: 0; }
.left.off::after { border-right-color: #999; }
.right.off::after { border-left-color: #999; }

.link {
    height: 20px;
}

.splitter {
    width: 12px;
    flex: none;
    border-left: 3px solid #f4f4f4;
    border-right: 3px solid #f4f4f4;
    background: #a8a8a8;
}

/* wave view */
.waves {
    display: flex;
    flex-direction: column;
    flex: 1920 1 0;
    min-width: 0;
    border-top: 2px solid #888;
    border-left: 3px solid #333;
    border-right: 2px solid #f0f0f0;
}

.band {
    width: 100%;
    height: 49px;
    background: #000;
}

.wave-body {
    display: flex;
    flex: 1;
    min-height: 0;
    margin-top: 2px;
    border-top: 2px solid #333;
    box-shadow: 0 -2px #fff;
}

.canvas {
    display: flex;
    flex-direction: column;
    flex: 1;
    min-width: 0;
}

.ruler {
    width: 100%;
    height: 30px;
    background: #a0a0a4;
    border-bottom: 1px solid #333;
}

.plot {
    width: 100%;
    flex: 1;
    min-height: 0;
    background: #000;
}

.overview {
    width: 100%;
    height: 28px;
    background: #a0a0a4;
}

.ruler path, .overview path {
    stroke: #000;
    stroke-width: 2px;
    fill: none;
}

.ruler text, .overview text {
    font-size: 20px;
    fill: #111;
}

.plot path, .plot line {
    fill: none;
    stroke-width: 2px;
}

.plot .lo { stroke: #00bcbc; }
.plot .hi { stroke: #00c800; }
.plot path.busy { stroke: #00ffff; stroke-width: 1px; }
.plot path.caps { stroke: #00e0e0; }

.plot text {
    fill: #f0f0f0;
    text-anchor: middle;
}

.cursor {
    stroke: #ff00ff;
    stroke-width: 1px;
}

.plot line.cursor {
    stroke: #e000e0;
}

.knob {
    fill: #ff00ff;
    stroke: #fff;
}

.band text {
    fill: #ff00ff;
}

.band .cursor-name {
    font-weight: bold;
}

.outside {
    fill: #606060;
}

.limit {
    fill: #00ffff;
}

/* tabs and status bar */
.tabs {
    height: 34px;
    flex: none;
    border-bottom: 2px solid #fff;
}

.tab {
    gap: 6px;
    height: 31px;
    padding: 0 8px 0 7px;
    border: 2px solid;
    border-color: transparent #222 #222 #f0f0f0;
    border-radius: 0 0 3px 3px;
}

.tab svg {
    width: 22px;
    height: 16px;
}

.tab .tab-close {
    width: 12px;
    height: 12px;
}

.status {
    display: flex;
    align-items: center;
    justify-content: flex-end;
    gap: 4px;
    height: 32px;
    flex: none;
    padding: 3px 0 0;
}

.cell {
    display: flex;
    align-items: center;
    height: 28px;
    padding: 0 10px;
    border: 1px solid;
    border-color: #888 #f4f4f4 #f4f4f4 #888;
    white-space: nowrap;
}

.scope { width: 500px; }
.state { width: 514px; padding-left: 1px; }
.now { width: 117px; padding: 0 5px; justify-content: flex-end; }
.views { padding: 0; }

.dot {
    width: 10px;
    height: 10px;
    margin-right: 10px;
    border: 1px solid #000;
    border-radius: 50%;
    background: radial-gradient(circle at 35% 35%, #fff 0 1px, #0000ff 3px);
}

.status-btn {
    width: 26px;
    height: 26px;
    border: 2px solid;
    border-color: #f4f4f4 #333 #333 #f4f4f4;
}

.status-btn svg {
    width: 22px;
    height: 17px;
}

.status-btn.on {
    border-color: #333 #f4f4f4 #f4f4f4 #333;
}

.resize {
    width: 18px;
    height: 18px;
    align-self: flex-end;
    background: repeating-linear-gradient(135deg, #fff 0 2px, #888 2px 4px, #c0c0c0 4px 5px);
    clip-path: polygon(100% 0, 100% 100%, 0 100%);
}
```
FILE: wave.js
```js
const T0 = 7.842;       // left edge of the view, us
const T1 = 20.009;      // right edge of the view
const CURSOR = 10.620754;
const END = 20.745;

// name, icon, value, wave
const signals = [
    ["WDOGINT", "port", "St0", { rise: 12.975 }],
    ["WDOGRES", "port", "St0", "low"],
    ["frc_data[31:0]", "port", "32'h0000_0000", { bus: ["0000_0000"] }],
    ["wdog_ctrl_en", "net", "St0", "low"],
    ["load_en", "net", "St0", "low"],
    ["load_tog_en", "net", "St0", "low"],
    ["load_req_w", "net", "St0", "low"],
    ["count_stop", "net", "St0", "low"],
    ["nxt_carry_mux[1:0]", "net", "2'h0", { bus: ["0", "", "0"], at: [12.875, 12.925] }],
    ["carry_msb", "net", "St0", { pulse: [12.925, 12.975] }],
    ["count_mux1[31:0]", "net", "32'h0000_002e", "busy"],
    ["count_mux2[31:0]", "net", "32'h0000_002e", "busy"],
    ["count_read[31:0]", "net", "32'h0000_002f", "busy"],
    ["high_count[15:0]", "net", "16'h0000", { bus: ["0000"] }],
    ["wdog_int_en", "net", "St1", "high"],
    ["wdog_int_en_rise", "net", "St0", "low"],
    ["wdog_res_en", "net", "St0", "low"],
    ["nxt_wdog_res", "net", "St0", "low"],
    ["int_clr_en", "net", "St0", "low"],
    ["int_clr_pulse", "net", "St0", "low"],
    ["int_clr_w", "net", "St0", "low"],
    ["nxt_wdog_ris", "net", "St0", { rise: 12.925 }],
    ["read_wdog_ris", "net", "St0", { rise: 12.975 }],
    ["wdog_mis", "net", "St0", { rise: 12.975 }],
    ["wdog_control[1:0]", "reg", "2'h1", { bus: ["1"] }],
    ["load_en_reg", "reg", "St0", "low"],
    ["wdog_load[31:0]", "reg", "32'h0000_00ff", { bus: ["0000_00ff"] }],
    ["load_req_tog_p", "reg", "St1", "high"],
    ["load_req_tog_w", "reg", "St1", "high"],
    ["count_stop_reg", "reg", "St0", "low"],
    ["nxt_count_low[15:0]", "reg", "16'h002e", "busy"],
    ["nxt_count_high[15:0]", "reg", "16'h0000", { bus: ["0000", "", "0000"], at: [12.925, 12.975] }],
    ["nxt_carry_0", "reg", "St0", { pulse: [12.875, 12.925] }],
    ["nxt_carry_1", "reg", "St0", { pulse: [12.875, 12.925] }]
];

function buildList() {
    document.getElementById("rows").innerHTML = signals.map(([name, icon, value]) => {
        const branch = name.includes("[")
            ? `<button class="expand" aria-label="Expand ${name}"><svg viewBox="0 0 9 9"><path d="M1 4.5h7M4.5 1v7" stroke="#000" stroke-width="2"/></svg></button>`
            : `<span class="branch"></span>`;
        return `<tr><td class="name">${branch}<svg><use href="#i-${icon}"/></svg>${name}</td><td class="value">${value}</td></tr>`;
    }).join("");
}

const plot = document.getElementById("plot");
const ruler = document.getElementById("ruler");
const overview = document.getElementById("overview");
const band = document.getElementById("band");

function draw() {
    const width = plot.clientWidth;
    const height = plot.clientHeight;
    const scale = width / (T1 - T0);
    const x = t => Math.round((t - T0) * scale);
    const rowHeight = document.getElementById("rows").clientHeight / (signals.length + 0.2);
    const cx = x(CURSOR) + 0.5;

    // crossing pair around each bus change
    const cross = (c, top, bottom) =>
        `M${c - 3} ${top}L${c + 3} ${bottom}M${c - 3} ${bottom}L${c + 3} ${top}`;

    let out = "";
    signals.forEach(([, , , wave], i) => {
        const top = Math.round(9 + i * rowHeight);
        const bottom = top + 23;
        const lo = d => { out += `<path class="lo" d="${d}"/>`; };
        const hi = d => { out += `<path class="hi" d="${d}"/>`; };

        if (wave === "low") {
            lo(`M0 ${bottom}H${width}`);
        } else if (wave === "high") {
            hi(`M0 ${top}H${width}`);
        } else if (wave === "busy") {
            let d = "";
            let caps = "";
            for (let k = Math.floor(T0 / 0.05); k < T1 / 0.05; k++) {
                const a = (k * 0.05 + 0.025 - T0) * scale;
                const b = a + 0.05 * scale;
                d += cross(a, top, bottom);
                caps += `M${a + 2} ${top}H${b - 2}M${a + 2} ${bottom}H${b - 2}`;
            }
            out += `<path class="busy" d="${d}"/><path class="caps" d="${caps}"/>`;
        } else if (wave.rise) {
            const r = x(wave.rise);
            lo(`M0 ${bottom}H${r}`);
            hi(`M${r} ${bottom + 1}V${top}H${width}`);
        } else if (wave.pulse) {
            const [a, b] = wave.pulse.map(x);
            lo(`M0 ${bottom}H${a}M${b} ${top}V${bottom}H${width}`);
            hi(`M${a} ${bottom}V${top}H${b}`);
        } else {
            const at = (wave.at || []).map(x);
            const edges = [-3, ...at, width + 3];
            wave.bus.forEach((label, n) => {
                const a = edges[n] + 3;
                const b = edges[n + 1] - 3;
                lo(`M${a} ${top}H${b}M${a} ${bottom}H${b}`);
                if (label) {
                    out += `<text x="${(a + b) / 2}" y="${top + 17}">${label}</text>`;
                }
            });
            at.forEach(c => lo(cross(c, top, bottom)));
        }
    });
    out += `<line class="cursor" x1="${cx}" x2="${cx}" y1="0" y2="${height}"/>`;
    plot.innerHTML = out;

    // main ruler, one tick every 0.1us
    let ticks = "";
    let labels = "";
    for (let k = 79; k <= 200; k++) {
        const size = k % 10 === 0 ? 21 : k % 5 === 0 ? 12 : 6;
        ticks += `M${x(k / 10)} 29v${-size}`;
        if (k % 10 === 0 && k < 200) {
            labels += `<text x="${x(k / 10) + 2}" y="22">${k / 10}</text>`;
        }
    }
    ruler.innerHTML = `<path d="${ticks}"/>${labels}<line class="cursor" x1="${cx}" x2="${cx}" y1="0" y2="30"/>`;

    // full-range ruler, 0 .. END
    const start = 24;
    const step = (width - start - 25) / END;
    const ox = t => Math.round(start + t * step);
    ticks = labels = "";
    for (let k = 0; k <= 103; k++) {
        const size = k % 10 === 0 ? 20 : k % 5 === 0 ? 12 : 6;
        ticks += `M${ox(k / 5)} 28v${-size}`;
        if (k % 10 === 0) {
            labels += `<text x="${ox(k / 5) + 2}" y="17">${k / 5}</text>`;
        }
    }
    overview.innerHTML = `<rect class="outside" width="${start}" height="28"/>
        <rect class="outside" x="${ox(END)}" width="25" height="28"/>
        <rect class="limit" x="${ox(END) - 1}" width="3" height="28"/>
        <path d="${ticks}"/>${labels}
        <line class="cursor" x1="${ox(CURSOR) + 0.5}" x2="${ox(CURSOR) + 0.5}" y1="0" y2="28"/>`;

    band.innerHTML = `<line class="cursor" x1="${cx}" x2="${cx}" y1="2" y2="49"/>
        <circle class="knob" cx="${cx}" cy="22" r="4"/>
        <text class="cursor-name" x="${cx + 6}" y="19">C1:${CURSOR}</text>
        <text x="${cx + 6}" y="43">REF</text>`;
}

buildList();
draw();
window.addEventListener("resize", draw);
```
